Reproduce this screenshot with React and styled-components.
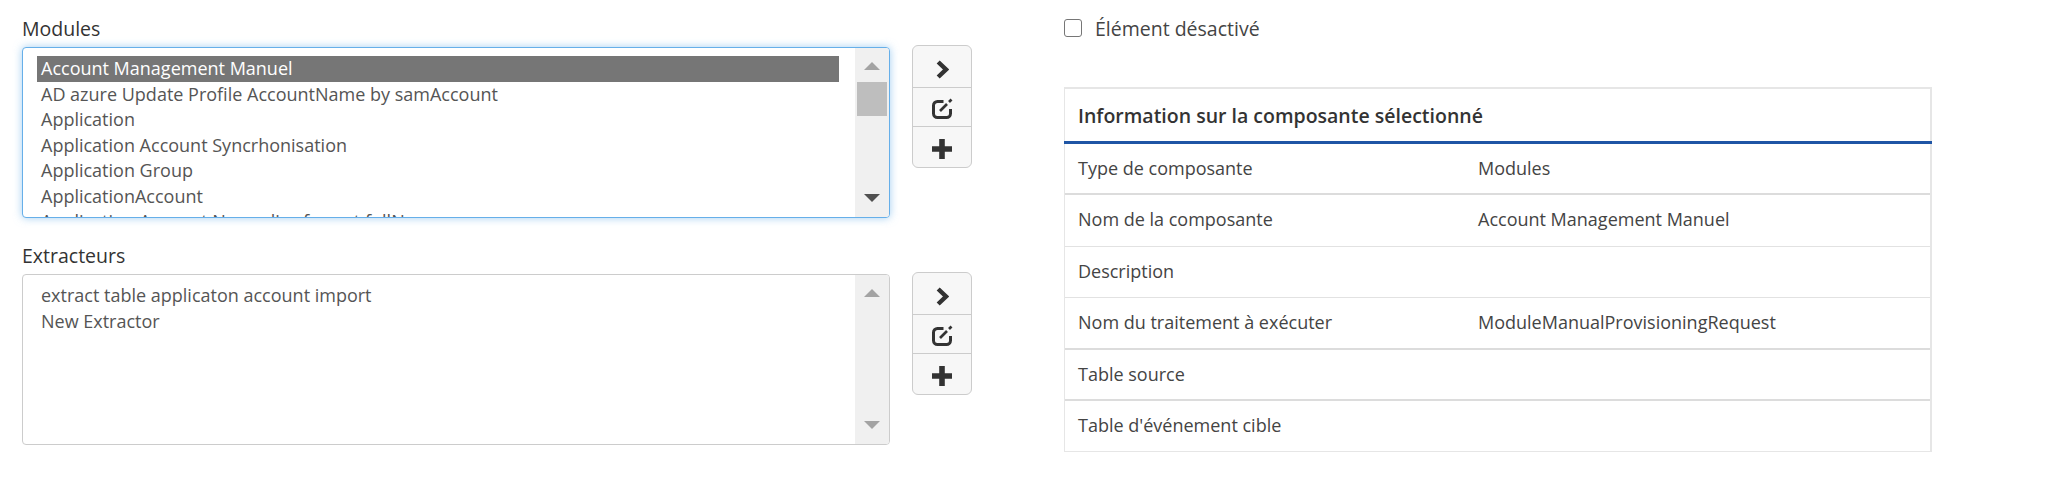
import React from 'react'
import styled, { createGlobalStyle } from 'styled-components'

const GlobalStyle = createGlobalStyle`
  html, body { margin: 0; padding: 0; background: #fff; }
  body { font-family: 'Open Sans', 'Noto Sans', sans-serif; font-size: 18px; color: #333; }
`;

const Page = styled.div`
  width: 2046px; height: 504px; box-sizing: border-box; padding: 16px 114px 0 22px;
  display: flex; overflow: hidden;
`;

const LeftColumn = styled.div`
  width: 950px; display: flex; flex-direction: column; gap: 25px;
`;

const RightColumn = styled.div`
  width: 868px; margin-left: 92px;
`;

const FieldLabel = styled.div`
  font-size: 19.5px; line-height: 24px; font-weight: 500; color: #333; padding-top: 1px; margin-bottom: 6px;
`;

const FieldRow = styled.div`
  display: flex; align-items: flex-start; gap: 22px;
`;

const ListBox = styled.div`
  width: 868px; height: 171px; box-sizing: border-box; display: flex; overflow: hidden;
  border-radius: 4px; background: #fff;
  border: 1px solid ${props => props.$focused ? '#66afe9' : '#ccc'};
  box-shadow: ${props => props.$focused ? '0 0 8px rgba(102, 175, 233, .6)' : 'none'};
`;

const ListItems = styled.div`
  flex: 1; min-width: 0; padding: 8px 16px 0 14px; overflow: hidden;
`;

const ListItem = styled.div`
  height: 25.5px; line-height: 24px; font-size: 18px; padding-left: 4px; white-space: nowrap;
  color: ${props => props.$selected ? '#fff' : '#555'};
  background: ${props => props.$selected ? '#767676' : 'transparent'};
`;

const ScrollTrack = styled.div`
  position: relative; width: 34px; flex: none; background: #f0f0f0;
`;

const ScrollThumb = styled.div`
  position: absolute; left: 2px; top: 34px; width: 30px; height: 34px; background: #bebebe;
`;

const ScrollArrow = styled.svg`
  position: absolute; left: 9px; width: 16px; height: 8px;
  ${props => props.$down ? 'bottom: 15px;' : 'top: 14px;'}
`;

const ButtonGroup = styled.div`
  width: 60px; height: 123px; display: flex; flex-direction: column; flex: none; margin-top: -2px;
  border: 1px solid #ccc; border-radius: 6px; background: #f7f7f7; box-sizing: border-box; overflow: hidden;
`;

const ActionButton = styled.div`
  flex: 1; box-sizing: border-box; display: flex; align-items: center; justify-content: center;
  padding-top: ${props => props.$nudge}px;
  border-bottom: 1px solid #ccc;
  &:last-child { border-bottom: none; }
`;

const CheckRow = styled.label`
  display: flex; align-items: center; height: 24px; margin-bottom: 47px; font-size: 19.5px; color: #444;
`;

const CheckBox = styled.span`
  width: 16px; height: 16px; margin-right: 13px; border: 1px solid #767676; border-radius: 3px; background: #fff;
`;

const InfoTable = styled.div`
  border-style: solid; border-color: #e6e6e6; border-width: 2px 2px 1px 1px;
`;

const InfoHeader = styled.div`
  height: 52px; display: flex; align-items: center;
  font-size: 19.5px; font-weight: 600; color: #333; border-bottom: 3px solid #1f55a5;
  margin: 0 -2px 0 -1px; padding-left: 14px;
`;

const InfoRow = styled.div`
  display: grid; grid-template-columns: 400px 1fr; align-items: start; height: 51.4px; box-sizing: border-box;
  padding: 12px 0 0 13px; font-size: 18px; line-height: 24px; color: #444;
  border-bottom: ${props => props.$thick ? '2px solid #dcdcdc' : '1px solid #e2e2e2'};
  &:last-child { border-bottom: none; height: 50.4px; }
`;

const modules = [
  'Account Management Manuel',
  'AD azure Update Profile AccountName by samAccount',
  'Application',
  'Application Account Syncrhonisation',
  'Application Group',
  'ApplicationAccount',
  'Application Account Normalize format fullName',
];

const extractors = ['extract table applicaton account import', 'New Extractor'];

const infoRows = [
  { label: 'Type de composante', value: 'Modules', thick: true },
  { label: 'Nom de la composante', value: 'Account Management Manuel' },
  { label: 'Description', value: '' },
  { label: 'Nom du traitement à exécuter', value: 'ModuleManualProvisioningRequest', thick: true },
  { label: 'Table source', value: '', thick: true },
  { label: "Table d'événement cible", value: '' },
];

function Scrollbar({ hasThumb }) {
  return (
    <ScrollTrack>
      <ScrollArrow viewBox="0 0 16 8"><path d="M8 0 L16 8 L0 8 Z" fill="#a3a3a3" /></ScrollArrow>
      {hasThumb && <ScrollThumb />}
      <ScrollArrow $down viewBox="0 0 16 8">
        <path d="M0 0 L16 0 L8 8 Z" fill={hasThumb ? '#505050' : '#a3a3a3'} />
      </ScrollArrow>
    </ScrollTrack>
  );
}

function Actions() {
  return (
    <ButtonGroup>
      <ActionButton $nudge={5}>
        <svg width="13" height="19" viewBox="0 0 13 19">
          <path d="M2.2 2 L10 9.5 L2.2 17" fill="none" stroke="#333" strokeWidth="4.4" />
        </svg>
      </ActionButton>
      <ActionButton $nudge={2}>
        <svg width="21" height="21" viewBox="0 0 21 21" fill="none" stroke="#333" strokeWidth="3">
          <path d="M11.5 3.5 H5.5 a4 4 0 0 0 -4 4 v8 a4 4 0 0 0 4 4 h9 a4 4 0 0 0 4 -4 V11" />
          <path d="M8 13 L15 6" strokeWidth="2.6" />
          <path d="M17 4 L19.5 1.5" strokeWidth="2.6" />
        </svg>
      </ActionButton>
      <ActionButton $nudge={4}>
        <svg width="20" height="20" viewBox="0 0 20 20">
          <path d="M0 10 H20 M10 0 V20" stroke="#333" strokeWidth="5.6" />
        </svg>
      </ActionButton>
    </ButtonGroup>
  );
}

export default function App() {
  return (
    <>
      <GlobalStyle />
      <Page>
        <LeftColumn>
          <div>
            <FieldLabel>Modules</FieldLabel>
            <FieldRow>
              <ListBox $focused>
                <ListItems>
                  {modules.map((name, i) => (
                    <ListItem key={name} $selected={i === 0}>{name}</ListItem>
                  ))}
                </ListItems>
                <Scrollbar hasThumb />
              </ListBox>
              <Actions />
            </FieldRow>
          </div>
          <div>
            <FieldLabel>Extracteurs</FieldLabel>
            <FieldRow>
              <ListBox>
                <ListItems>
                  {extractors.map(name => <ListItem key={name}>{name}</ListItem>)}
                </ListItems>
                <Scrollbar />
              </ListBox>
              <Actions />
            </FieldRow>
          </div>
        </LeftColumn>
        <RightColumn>
          <CheckRow><CheckBox />Élément désactivé</CheckRow>
          <InfoTable>
            <InfoHeader>Information sur la composante sélectionné</InfoHeader>
            {infoRows.map(row => (
              <InfoRow key={row.label} $thick={row.thick}>
                <div>{row.label}</div>
                <div>{row.value}</div>
              </InfoRow>
            ))}
          </InfoTable>
        </RightColumn>
      </Page>
    </>
  );
}
